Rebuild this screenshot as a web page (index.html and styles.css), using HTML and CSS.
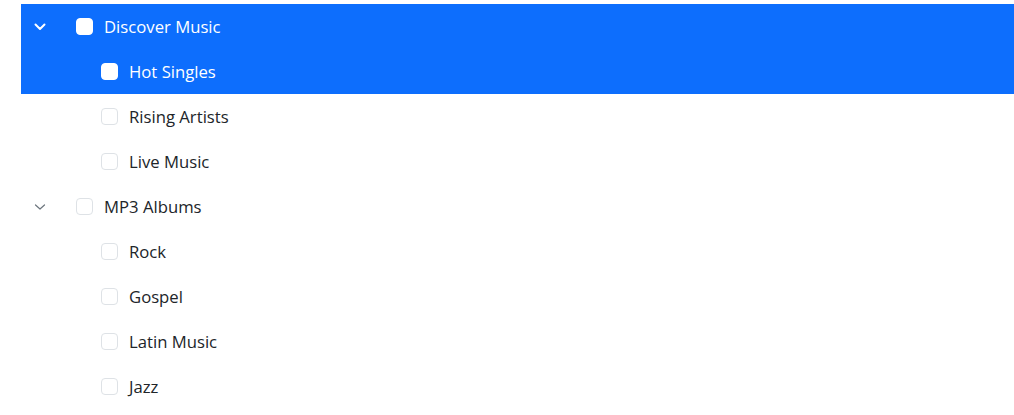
FILE: index.html
```html
<!DOCTYPE html>
<html>
<head>
<meta charset="utf-8">
<link rel="stylesheet" href="styles.css">
</head>
<body>
<ul class="tree">
  <li class="row lvl0 selected">
    <span class="toggle"><svg width="12" height="8" viewBox="0 0 12 8"><path d="M1.5 1.5 L6 6 L10.5 1.5" fill="none" stroke="currentColor" stroke-width="2" stroke-linecap="round" stroke-linejoin="round"/></svg></span>
    <span class="box"></span><span class="label">Discover Music</span>
  </li>
  <li class="row lvl1 selected"><span class="box"></span><span class="label">Hot Singles</span></li>
  <li class="row lvl1"><span class="box"></span><span class="label">Rising Artists</span></li>
  <li class="row lvl1"><span class="box"></span><span class="label">Live Music</span></li>
  <li class="row lvl0">
    <span class="toggle"><svg width="12" height="8" viewBox="0 0 12 8"><path d="M1.5 2 L6 6 L10.5 2" fill="none" stroke="currentColor" stroke-width="1.2" stroke-linecap="round" stroke-linejoin="round"/></svg></span>
    <span class="box"></span><span class="label">MP3 Albums</span>
  </li>
  <li class="row lvl1"><span class="box"></span><span class="label">Rock</span></li>
  <li class="row lvl1"><span class="box"></span><span class="label">Gospel</span></li>
  <li class="row lvl1"><span class="box"></span><span class="label">Latin Music</span></li>
  <li class="row lvl1"><span class="box"></span><span class="label">Jazz</span></li>
</ul>
</body>
</html>
```

FILE: styles.css
```css
html, body {
  margin: 0;
  padding: 0;
  background: #fff;
}
body {
  font-family: "Open Sans", "Noto Sans", sans-serif;
  font-size: 16.7px;
  color: #212529;
}
.tree {
  list-style: none;
  margin: 4px 0 0 21px;
  padding: 0;
}
.row {
  display: flex;
  align-items: center;
  height: 45px;
}
.lvl0 {
  padding-left: 13px;
}
.lvl1 {
  padding-left: 80px;
}
.toggle {
  width: 20px;
  display: flex;
  align-items: center;
  justify-content: flex-start;
  color: #6c757d;
  margin-right: 22px;
}
.selected .toggle {
  color: #fff;
}
.box {
  width: 15px;
  height: 15px;
  border: 1px solid #dee2e6;
  border-radius: 4px;
  background: #fff;
  flex: none;
}
.selected .box {
  border-color: #fff;
}
.label {
  margin-left: 11px;
  line-height: 1;
  padding-top: 2px;
}
.selected {
  background: #0d6efd;
  color: #fff;
}
```
